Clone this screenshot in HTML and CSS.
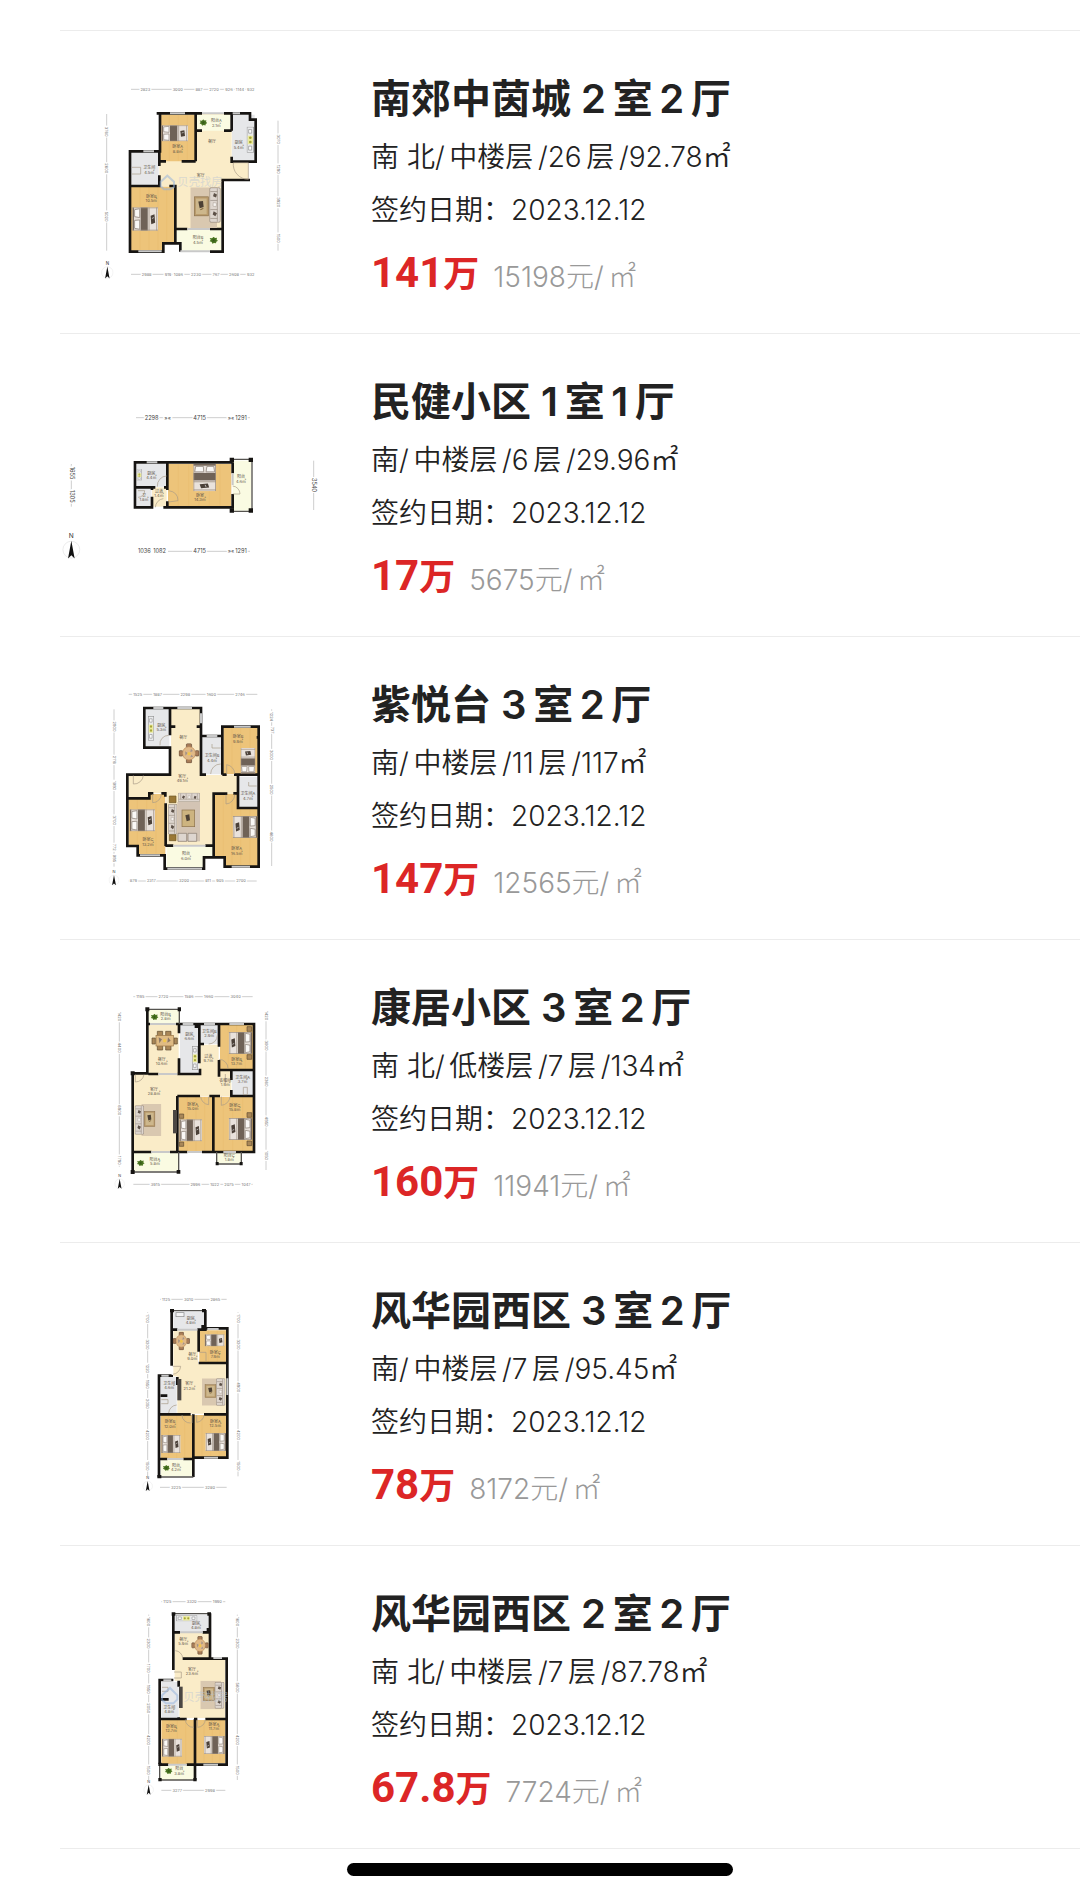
FILE: index.html
```
<!DOCTYPE html>
<html lang="zh-CN">
<head>
    <meta charset="UTF-8">
    <meta name="viewport" content="width=device-width, initial-scale=1.0">
    <title>成交记录</title>
    <link rel="stylesheet" href="styles.css">
</head>
<body>
    <!-- furniture shared by the floor plans -->
    <svg class="defs" width="0" height="0" aria-hidden="true">
        <defs>
            <symbol id="bed" viewBox="0 0 80 50" preserveAspectRatio="none">
                <rect width="80" height="50" fill="#e9e2dc"/>
                <rect width="5" height="50" fill="#77685a"/>
                <path d="M7 5l16-2v19l-16-2zM7 28l16-1v20l-16-2z" fill="#faf8f6" stroke="#8d8279" stroke-width="2"/>
                <rect x="26" width="22" height="50" fill="#6f6257"/>
                <path d="M52 0v50M76 0v50M0 1h80M0 49h80" stroke="#9b8d80" stroke-width="2"/>
                <path d="M57 18l12-3 2 18-12 3z" fill="#4b4038"/>
                <path d="M61 24l6-2" stroke="#ddd" stroke-width="2"/>
            </symbol>
            <symbol id="sofa" viewBox="0 0 34 100" preserveAspectRatio="none">
                <rect x="1" y="1" width="32" height="98" rx="4" fill="#ded6cf" stroke="#85786c" stroke-width="2"/>
                <path d="M24 3v94M3 12h21M3 37h21M3 63h21M3 88h21" stroke="#968a7f" stroke-width="2"/>
                <path d="M14 16l9 4-3 9-9-4zM13 68l10 5-5 9-8-5z" fill="#5d5148"/>
                <path d="M12 43l10 2-2 10-9-2z" fill="#f6f3f0" stroke="#85786c"/>
            </symbol>
            <symbol id="table" viewBox="0 0 80 120" preserveAspectRatio="none">
                <rect width="80" height="120" fill="#d9c8b0"/>
                <rect x="12" y="28" width="42" height="56" fill="#b99b6c" stroke="#8b704a" stroke-width="2"/>
                <rect x="17" y="33" width="32" height="46" fill="#cdb78c"/>
                <path d="M24 42l14-2 2 18-12 4z" fill="#4d4134"/>
                <path d="M30 66l9-4" stroke="#7b6238" stroke-width="3"/>
            </symbol>
            <symbol id="plant" viewBox="0 0 26 22">
                <path d="M13 0l4 4 6-1-1 6 4 3-5 3-1 5-6-1-5 2-2-5-6-2 3-5-3-5 7 1z" fill="#4f7a25"/>
                <path d="M6 11h14M13 5v12M8 6l10 10M18 6L8 16" stroke="#2f5513" stroke-width="1.5"/>
            </symbol>
            <symbol id="dining" viewBox="0 0 64 60" preserveAspectRatio="none">
                <g fill="#a77c58" stroke="#5f4734" stroke-width="2">
                    <rect x="24" y="1" width="16" height="12" rx="3"/>
                    <rect x="24" y="47" width="16" height="12" rx="3"/>
                    <rect x="1" y="22" width="12" height="16" rx="3"/>
                    <rect x="51" y="22" width="12" height="16" rx="3"/>
                </g>
                <circle cx="32" cy="30" r="20" fill="#e0b987" stroke="#b88758" stroke-width="2"/>
                <path d="M20 24l8 5-7 8zM38 16l6 7-8 4zM40 34l5 6-9 2z" fill="#a2938a"/>
                <circle cx="32" cy="31" r="5" fill="#f1c64b"/>
            </symbol>
            <symbol id="compass" viewBox="0 0 50 80">
                <circle cx="25" cy="50" r="23" fill="#fff" stroke="#ddd" stroke-width="1.5"/>
                <path d="M25 26l9 48-9-9-9 9z" fill="#111"/>
                <text x="25" y="18" font-size="18" text-anchor="middle" fill="#333">N</text>
            </symbol>
            <symbol id="stove" viewBox="0 0 22 80" preserveAspectRatio="none">
                <rect x="1" y="1" width="20" height="78" fill="#e9eaec" stroke="#8d8d8d" stroke-width="2"/>
                <rect x="3" y="28" width="16" height="26" fill="#eceb9c"/>
                <path d="M6 9h9v11H6zM6 60h9v12H6z" fill="#fff" stroke="#888" stroke-width="2"/>
                <circle cx="11" cy="34" r="4" fill="#a5a43a"/>
                <circle cx="11" cy="47" r="4" fill="#a5a43a"/>
            </symbol>
        </defs>
    </svg>

    <main class="list">
        <article class="item">
            <svg class="plan" viewBox="30 6 780 720" role="img" aria-label="户型图">
                <path class="hall" d="M328 162H545V304H595V360H515V506H378V380H328z"/>
                <path class="wood" d="M330 164H437V304H330zM243 380H376V548H340V572H243z"/>
                <path class="grain" d="M358 165V303M385 165V303M412 165V303M270 381V571M297 381V571M324 381V571M350 381V546"/>
                <path class="tile" d="M243 276H326V378H243zM546 164H614V303H546z"/>
                <path class="balcony" d="M441 164H543V212H441zM380 508H515V572H395V548H380z"/>
                <path class="wall" d="M328 160H437V304M320 160H330V274H240V575H340V550H391V575M437 160H456M522 160H545V212M545 160H600V179H617V305H545V290M600 360H518V575H480M328 274V318M328 346V378H240M358 378H376V550M376 507H412M480 507H518M437 212H456M522 212H545M330 304H348M395 304H437"/>
                <path class="window" d="M360 160H405M280 274H312M265 574H335M456 160H522M391 574H480M548 160H570M412 507H480"/>
                <path class="door" d="M550 308H595V358A45 45 0 0 1 550 308M246 322H272V342H246"/>
                <use href="#bed" x="334" y="196" width="80" height="48"/>
                <use href="#bed" x="247" y="442" width="77" height="70"/>
                <use href="#table" x="421" y="382" width="80" height="122"/>
                <use href="#sofa" x="478" y="382" width="34" height="106"/>
                <use href="#plant" x="446" y="178" width="28" height="20"/>
                <use href="#plant" x="477" y="530" width="28" height="22"/>
                <use href="#stove" x="590" y="200" width="22" height="78"/>
                <g class="mark"><path d="M332 365l20-18 20 18v16l-12 7h-18l-10-9z"/><text x="382" y="379">贝壳找房</text></g>
                <g class="room">
                    <text x="383" y="265">卧室A</text><text x="383" y="280">8.8㎡</text>
                    <text x="304" y="413">卧室B</text><text x="304" y="427">10.5㎡</text>
                    <text x="298" y="327">卫生间</text><text x="298" y="341">4.5㎡</text>
                    <text x="499" y="187">阳台A</text><text x="499" y="200">2.1㎡</text>
                    <text x="566" y="252">厨房</text><text x="566" y="266">5.4㎡</text>
                    <text x="486" y="250">餐厅</text><text x="452" y="350">客厅</text>
                    <text x="444" y="538">阳台B</text><text x="444" y="552">4.5㎡</text>
                </g>
                <path class="rule" d="M243 88H612M243 643H612M170 162V572M684 182V572"/>
                <g class="dim">
                    <text x="286" y="92">2823</text><text x="383" y="92">3000</text><text x="447" y="92">887</text><text x="492" y="92">2720</text><text x="537" y="92">926</text><text x="570" y="92">1144</text><text x="602" y="92">932</text>
                    <text x="290" y="647">2988</text><text x="354" y="647">919</text><text x="385" y="647">1086</text><text x="438" y="647">2230</text><text x="498" y="647">767</text><text x="552" y="647">2608</text><text x="602" y="647">932</text>
                </g>
                <g class="dim down">
                    <text x="170" y="220">3760</text><text x="170" y="330">2600</text><text x="170" y="475">5020</text>
                    <text x="684" y="243">3070</text><text x="684" y="333">1280</text><text x="684" y="432">3820</text><text x="684" y="540">1500</text>
                </g>
                <use href="#compass" x="153" y="600" width="38" height="60"/>
            </svg>
            <div class="info">
                <h2 class="title">南郊中茵城 2&#8198;室&#8198;2&#8198;厅</h2>
                <p class="meta">南 北/&#8198;中楼层&#8198;/26&#8198;层&#8198;/92.78㎡</p>
                <p class="meta">签约日期：2023.12.12</p>
                <p class="price"><strong class="total"><span class="num">141</span>万</strong><span class="unit">15198元/&#8198;㎡</span></p>
            </div>
        </article>

        <article class="item">
            <svg class="plan" viewBox="30 -75 780 720" role="img" aria-label="户型图">
                <path class="hall" d="M306 292H350V350H306z"/>
                <path class="wood" d="M354 222H544V348H354z"/>
                <path class="grain" d="M385 223V347M416 223V347M447 300V347M478 300V347M510 223V347"/>
                <path class="tile" d="M260 222H350V290H260zM260 294H304V348H260z"/>
                <path class="balcony" d="M548 212H604V362H548z"/>
                <path class="wall" d="M310 352H255V217H548M352 217V300M352 334V352H548V312M548 217V250M255 292H316M306 292V300M306 320V350M342 292H352M340 352H354"/>
                <path class="thin" d="M548 208H606V364H548"/>
                <path class="post" d="M539 203h13v13h-13zM596 203h13v13h-13zM539 355h13v13h-13zM596 355h13v13h-13z"/>
                <path class="window" d="M290 217H322M548 250V285"/>
                <path class="door" d="M322 290A28 30 0 0 1 350 258M356 302Q384 306 384 332L356 336M316 352A26 28 0 0 1 340 326M548 312H570A24 24 0 0 0 548 288M264 302H284A20 20 0 0 1 264 322"/>
                <g transform="translate(498 222) rotate(90)"><use href="#bed" width="82" height="68"/></g>
                <use href="#stove" x="260" y="238" width="16" height="34"/>
                <g class="room">
                    <text x="304" y="254">厨房</text><text x="304" y="268">4.4㎡</text>
                    <text x="282" y="322">卫</text><text x="282" y="334">1.8㎡</text>
                    <text x="327" y="308">过道</text><text x="327" y="320">1.4㎡</text>
                    <text x="450" y="321">卧室</text><text x="450" y="334">14.3㎡</text>
                    <text x="573" y="265">阳台</text><text x="573" y="278">4.6㎡</text>
                </g>
                <path class="rule" d="M258 83H600M354 484H600M64 222V350M791 212V360"/>
                <g class="dim big">
                    <text x="305" y="89">2298</text><text x="353" y="89">»«</text><text x="449" y="89">4715</text><text x="543" y="89">»«</text><text x="573" y="89">1291</text>
                    <text x="283" y="490">1036</text><text x="329" y="490">1082</text><text x="449" y="490">4715</text><text x="543" y="490">»«</text><text x="573" y="490">1291</text>
                </g>
                <g class="dim big down">
                    <text x="64" y="256">1655</text><text x="64" y="326">1305</text><text x="791" y="292">3540</text>
                </g>
                <use href="#compass" x="36" y="424" width="56" height="88"/>
            </svg>
            <div class="info">
                <h2 class="title">民健小区 1&#8198;室&#8198;1&#8198;厅</h2>
                <p class="meta">南/&#8198;中楼层&#8198;/6&#8198;层&#8198;/29.96㎡</p>
                <p class="meta">签约日期：2023.12.12</p>
                <p class="price"><strong class="total"><span class="num">17</span>万</strong><span class="unit">5675元/&#8198;㎡</span></p>
            </div>
        </article>

        <article class="item">
            <svg class="plan" viewBox="-90 -36 780 720" role="img" aria-label="户型图">
                <path class="hall" d="M243 86H330V285H442V342H370V496H228V340H178V354H115V286H243z"/>
                <path class="wood" d="M400 142H506V283H400zM115 356H178V342H226V522H145V496H115zM373 342H442V384H506V558H404V530H373z"/>
                <path class="grain" d="M426 143V282M452 143V282M480 143V282M142 358V495M170 358V520M198 345V520M400 345V528M426 345V556M452 386V556M480 386V556"/>
                <path class="tile" d="M168 86H238V200H168zM334 172H396V283H334zM446 290H504V382H446z"/>
                <path class="balcony" d="M230 500H368V530H340V562H230z"/>
                <path class="wall" d="M240 84H163V203H240V284H112V498H143V526H224V566H342V532H404V560H506V140H397V168H333V84H240V166M333 140H320M240 140H256M333 168V284H348M397 168V284M397 284H410M432 284H506M444 284V384H506M444 340H430M412 341H371V530M227 370V498M115 355H178V340H190M214 340H226V350M226 497H250M346 497H371M500 172H506"/>
                <path class="window" d="M190 84H220M262 84H306M350 168H382M432 140H482M150 526H210M425 560H480M232 566H336M250 497H346M333 100V130"/>
                <path class="door" d="M130 286V312A28 28 0 0 0 160 286M188 342V368A26 26 0 0 0 214 342M410 282V254A28 28 0 0 1 434 282M408 344V372A28 28 0 0 0 434 344M210 196A26 26 0 0 1 236 166M362 282A30 30 0 0 1 392 252M366 192V204H392M476 306V318H500"/>
                <rect x="262" y="366" width="68" height="118" fill="#d3c4b4"/>
                <rect x="276" y="390" width="38" height="50" fill="#cdb480" stroke="#8b704a" stroke-width="2"/>
                <path d="M286 406l12-3 2 18-10 3z" fill="#4d4134"/>
                <use href="#sofa" x="234" y="372" width="28" height="92"/>
                <g transform="translate(330 338) rotate(90)"><use href="#sofa" width="28" height="66"/></g>
                <path d="M238 348h20v20h-20zM238 464h20v18h-20z" fill="#9a7836" stroke="#6d5423" stroke-width="2"/>
                <path d="M264 460h26v24h-26zM294 460h26v24h-26z" fill="#ded6cf" stroke="#85786c" stroke-width="2"/>
                <use href="#dining" x="266" y="190" width="62" height="60"/>
                <use href="#bed" x="119" y="388" width="76" height="66"/>
                <g transform="translate(502 474) rotate(180)"><use href="#bed" width="74" height="66"/></g>
                <g transform="translate(452 282) rotate(-90)"><use href="#bed" width="78" height="44"/></g>
                <use href="#stove" x="174" y="108" width="18" height="74"/>
                <g class="room">
                    <text x="214" y="140">厨房</text><text x="214" y="154">5.3㎡</text>
                    <text x="280" y="178">餐厅</text>
                    <text x="277" y="294">客厅</text><text x="277" y="307">49.1㎡</text>
                    <text x="366" y="232">卫生间B</text><text x="366" y="246">4.4㎡</text>
                    <text x="444" y="175">卧室B</text><text x="444" y="189">9.9㎡</text>
                    <text x="474" y="346">卫生间A</text><text x="474" y="359">4.7㎡</text>
                    <text x="174" y="484">卧室C</text><text x="174" y="498">13.2㎡</text>
                    <text x="440" y="510">卧室A</text><text x="440" y="524">16.5㎡</text>
                    <text x="288" y="526">阳台</text><text x="288" y="540">6.0㎡</text>
                </g>
                <path class="rule" d="M116 43H502M116 603H500M72 88V560M545 88V558"/>
                <g class="dim">
                    <text x="143" y="47">1525</text><text x="203" y="47">1887</text><text x="286" y="47">2298</text><text x="364" y="47">1600</text><text x="450" y="47">2746</text>
                    <text x="130" y="607">879</text><text x="184" y="607">2317</text><text x="282" y="607">3200</text><text x="354" y="607">811</text><text x="390" y="607">905</text><text x="453" y="607">2700</text>
                </g>
                <g class="dim down">
                    <text x="72" y="145">2800</text><text x="72" y="245">2116</text><text x="72" y="322">1980</text><text x="72" y="426">3700</text><text x="72" y="507">772</text><text x="72" y="541">985</text>
                    <text x="545" y="115">1224</text><text x="545" y="156">737</text><text x="545" y="230">3000</text><text x="545" y="334">2500</text><text x="545" y="475">4600</text>
                </g>
                <use href="#compass" x="55" y="568" width="34" height="52"/>
            </svg>
            <div class="info">
                <h2 class="title">紫悦台 3&#8198;室&#8198;2&#8198;厅</h2>
                <p class="meta">南/&#8198;中楼层&#8198;/11&#8198;层&#8198;/117㎡</p>
                <p class="meta">签约日期：2023.12.12</p>
                <p class="price"><strong class="total"><span class="num">147</span>万</strong><span class="unit">12565元/&#8198;㎡</span></p>
            </div>
        </article>

        <article class="item">
            <svg class="plan" viewBox="-120 -27 780 720" role="img" aria-label="户型图">
                <path class="hall" d="M145 134H236V280H298V194H356V272H394V348H232V514H102V282H145z"/>
                <path class="wood" d="M360 134H460V270H360zM236 350H337V514H236zM342 350H460V514H342z"/>
                <path class="grain" d="M385 135V269M410 135V269M436 135V269M262 351V513M288 351V513M314 351V513M370 351V513M398 351V513M428 351V513"/>
                <path class="tile" d="M240 134H296V278H240zM300 134H356V192H300zM396 272H460V346H396z"/>
                <path class="balcony" d="M145 90H238V132H145zM102 518H234V574H102zM352 518H422V550H352z"/>
                <path class="wall" d="M142 88V280H98V576M142 132H150M228 132H462V516H345M98 516H154M210 516H262M306 516H345M237 132V160M237 235V280M232 282H300V266M298 132V250M298 192H312M357 132V200M357 240V270H462M357 270V290M394 270V300M394 330V348H462M232 348H300M328 348H360M392 348H462M232 348V516M340 348V516M175 282H145"/>
                <path class="thin" d="M142 88H238V132M98 576H236V516M350 516V552H424V516"/>
                <path class="post" d="M136 82h12v12h-12zM233 82h10v12h-10zM230 570h11v11h-11zM92 570h12v12h-12zM347 546h9v10h-9zM419 546h9v10h-9zM284 130h16v14h-16zM92 274h12v12h-12z"/>
                <path class="window" d="M150 132H228M248 132H280M312 132H345M388 132H432M262 516H306M175 282H232M154 516H210M370 516H408"/>
                <path class="door" d="M106 284V306A28 28 0 0 0 132 284M357 238A27 27 0 0 1 384 266M302 350A26 26 0 0 0 326 374V350M364 350V376A28 28 0 0 0 390 350M326 192A26 26 0 0 0 352 166M430 322H442V344H430zM376 282V310"/>
                <g transform="translate(456 222) rotate(180)"><use href="#bed" width="70" height="66"/></g>
                <use href="#bed" x="238" y="418" width="68" height="66"/>
                <g transform="translate(456 480) rotate(180)"><use href="#bed" width="70" height="66"/></g>
                <g fill="#a98758" stroke="#5e4a30" stroke-width="2">
                    <path d="M441 140h14v14h-14zM441 224h14v14h-14zM238 402h13v13h-13zM238 486h13v13h-13zM441 398h14v14h-14zM441 483h14v14h-14z"/>
                    <path d="M172 154h16v56h-16zM197 154h16v56h-16zM156 174h10v18h-10zM222 174h10v18h-10z"/>
                </g>
                <rect x="168" y="166" width="52" height="32" fill="#dfbb84" stroke="#987343" stroke-width="2"/>
                <path d="M176 172l10 6-8 12zM204 172l8 10-10 6z" fill="#8b7868"/>
                <circle cx="194" cy="182" r="5" fill="#f1c64b"/>
                <use href="#table" x="124" y="372" width="60" height="96"/>
                <use href="#sofa" x="104" y="376" width="28" height="88"/>
                <rect x="219" y="390" width="12" height="70" fill="#4b4743"/>
                <use href="#stove" x="276" y="198" width="18" height="72"/>
                <use href="#plant" x="151" y="101" width="25" height="20"/>
                <use href="#plant" x="109" y="539" width="26" height="20"/>
                <g class="room">
                    <text x="197" y="107">阳台B</text><text x="197" y="120">2.8㎡</text>
                    <text x="185" y="244">餐厅</text><text x="185" y="256">10.6㎡</text>
                    <text x="268" y="168">厨房</text><text x="268" y="181">6.6㎡</text>
                    <text x="328" y="160">卫生间B</text><text x="328" y="172">2.9㎡</text>
                    <text x="325" y="233">过道</text><text x="325" y="246">9.7㎡</text>
                    <text x="410" y="242">卧室B</text><text x="410" y="255">13.7㎡</text>
                    <text x="428" y="296">卫生间A</text><text x="428" y="309">3.7㎡</text>
                    <text x="376" y="305">衣帽间</text><text x="376" y="317">1.9㎡</text>
                    <text x="162" y="332">客厅</text><text x="162" y="345">28.8㎡</text>
                    <text x="278" y="378">卧室A</text><text x="278" y="390">15.0㎡</text>
                    <text x="404" y="380">卧室C</text><text x="404" y="393">15.8㎡</text>
                    <text x="165" y="542">阳台A</text><text x="165" y="556">5.8㎡</text>
                    <text x="388" y="530">阳台C</text><text x="388" y="543">1.8㎡</text>
                </g>
                <path class="rule" d="M100 50H458M100 613H458M58 96V560M498 96V570"/>
                <g class="dim">
                    <text x="121" y="54">1195</text><text x="190" y="54">2720</text><text x="267" y="54">1586</text><text x="326" y="54">1660</text><text x="407" y="54">3040</text>
                    <text x="166" y="617">3915</text><text x="286" y="617">2996</text><text x="344" y="617">1022</text><text x="387" y="617">2075</text><text x="438" y="617">1047</text>
                </g>
                <g class="dim down">
                    <text x="58" y="115">1420</text><text x="58" y="208">4400</text><text x="58" y="396">6800</text><text x="58" y="546">1780</text>
                    <text x="498" y="112">1420</text><text x="498" y="202">3900</text><text x="498" y="310">2360</text><text x="498" y="430">4850</text><text x="498" y="532">1050</text>
                </g>
                <use href="#compass" x="42" y="580" width="34" height="50"/>
            </svg>
            <div class="info">
                <h2 class="title">康居小区 3&#8198;室&#8198;2&#8198;厅</h2>
                <p class="meta">南 北/&#8198;低楼层&#8198;/7&#8198;层&#8198;/134㎡</p>
                <p class="meta">签约日期：2023.12.12</p>
                <p class="price"><strong class="total"><span class="num">160</span>万</strong><span class="unit">11941元/&#8198;㎡</span></p>
            </div>
        </article>

        <article class="item">
            <svg class="plan" viewBox="-180 -33 780 720" role="img" aria-label="户型图">
                <path class="hall" d="M160 136H234V236H320V386H172V274H160z"/>
                <path class="wood" d="M238 136H320V232H238zM122 390H217V520H122zM222 390H320V516H222z"/>
                <path class="grain" d="M265 137V231M292 137V231M146 391V519M170 391V519M194 391V519M246 391V515M272 391V515M298 391V515"/>
                <path class="tile" d="M160 80H254V132H160zM122 276H170V386H122z"/>
                <path class="balcony" d="M122 524H217V574H122z"/>
                <path class="wall" d="M155 75V242M155 134H172M232 134H256V75M256 130H322V518H222M236 134V200M236 234H322M155 270V272H117V576M122 332H142M172 276V300M120 388H212M172 384V388M252 388H322M220 388V576M120 522H142M190 522H220"/>
                <path class="thin" d="M155 77H256M117 576H220"/>
                <path class="post" d="M150 72h12v10h-12zM246 72h12v10h-12zM112 570h12v10h-12zM244 120h12v12h-12z"/>
                <path class="window" d="M262 132H296M172 134H232M124 272H146M322 280V330M252 518H294M142 522H190"/>
                <path class="door" d="M158 244H182A26 26 0 0 1 158 268M238 202H258V228M216 390V414M230 390V412A24 24 0 0 0 252 390M186 390A24 24 0 0 0 212 414M146 384A26 26 0 0 1 170 360M124 344H144V356H124"/>
                <use href="#dining" x="158" y="140" width="52" height="56"/>
                <use href="#bed" x="254" y="148" width="60" height="36"/>
                <use href="#bed" x="124" y="450" width="58" height="54"/>
                <g transform="translate(318 498) rotate(180)"><use href="#bed" width="62" height="54"/></g>
                <use href="#table" x="246" y="280" width="62" height="82"/>
                <use href="#sofa" x="288" y="280" width="28" height="82"/>
                <rect x="172" y="282" width="12" height="64" fill="#4b4743"/>
                <rect x="168" y="83" width="24" height="12" fill="#f4f4f4" stroke="#888" stroke-width="2"/>
                <use href="#plant" x="128" y="539" width="22" height="20"/>
                <g class="room">
                    <text x="212" y="104">厨房</text><text x="212" y="117">4.8㎡</text>
                    <text x="217" y="213">餐厅</text><text x="217" y="226">9.0㎡</text>
                    <text x="286" y="207">卧室C</text><text x="286" y="220">7.9㎡</text>
                    <text x="148" y="300">卫生间</text><text x="148" y="313">4.6㎡</text>
                    <text x="208" y="301">客厅</text><text x="208" y="314">21.2㎡</text>
                    <text x="150" y="415">卧室B</text><text x="150" y="428">12.0㎡</text>
                    <text x="286" y="413">卧室A</text><text x="286" y="426">12.5㎡</text>
                    <text x="168" y="546">阳台</text><text x="168" y="559">4.2㎡</text>
                </g>
                <path class="rule" d="M120 43H320M120 607H320M83 82V574M354 82V574"/>
                <g class="dim">
                    <text x="138" y="47">1125</text><text x="206" y="47">3010</text><text x="286" y="47">2865</text>
                    <text x="168" y="611">3225</text><text x="270" y="611">3280</text>
                </g>
                <g class="dim down">
                    <text x="83" y="106">1700</text><text x="83" y="184">3200</text><text x="83" y="256">1220</text><text x="83" y="303">1850</text><text x="83" y="362">2050</text><text x="83" y="455">4200</text><text x="83" y="548">1500</text>
                    <text x="354" y="106">1700</text><text x="354" y="184">3200</text><text x="354" y="312">4800</text><text x="354" y="455">4200</text><text x="354" y="548">1500</text>
                </g>
                <use href="#compass" x="66" y="572" width="34" height="50"/>
            </svg>
            <div class="info">
                <h2 class="title">风华园西区 3&#8198;室&#8198;2&#8198;厅</h2>
                <p class="meta">南/&#8198;中楼层&#8198;/7&#8198;层&#8198;/95.45㎡</p>
                <p class="meta">签约日期：2023.12.12</p>
                <p class="price"><strong class="total"><span class="num">78</span>万</strong><span class="unit">8172元/&#8198;㎡</span></p>
            </div>
        </article>

        <article class="item">
            <svg class="plan" viewBox="-180 -39 780 720" role="img" aria-label="户型图">
                <path class="hall" d="M164 128H268V206H315V384H178V272H164z"/>
                <path class="wood" d="M124 390H222V522H124zM228 390H316V520H228z"/>
                <path class="grain" d="M148 391V521M172 391V521M197 391V521M252 391V519M277 391V519M300 391V519"/>
                <path class="tile" d="M164 74H268V126H164zM124 276H176V384H124z"/>
                <path class="balcony" d="M122 526H222V570H122z"/>
                <path class="wall" d="M160 70V240M160 127H180M248 127H270M270 70V205M188 206H320V524H228M160 270H119V522M122 328H146M176 272V290M120 387H200M176 382V387M222 387H232M256 387H320M225 387V570M120 524H145M200 524H225"/>
                <path class="thin" d="M160 71H270M119 522V570H225"/>
                <path class="post" d="M155 67h11v10h-11zM262 67h11v10h-11zM115 564h10v10h-10zM220 564h10v10h-10zM260 114h12v12h-12zM115 518h10v10h-10z"/>
                <path class="window" d="M180 127H248M130 271H154M280 204H306M250 524H294M145 524H200"/>
                <path class="door" d="M166 182A24 24 0 0 1 188 204M162 246H184V264H162M196 388A24 24 0 0 0 222 412M232 410V388M232 412A24 24 0 0 0 256 388M126 292H144V304H126"/>
                <use href="#dining" x="214" y="138" width="52" height="56"/>
                <use href="#bed" x="126" y="446" width="60" height="54"/>
                <g transform="translate(314 492) rotate(180)"><use href="#bed" width="62" height="54"/></g>
                <use href="#table" x="241" y="272" width="62" height="86"/>
                <use href="#sofa" x="284" y="276" width="29" height="80"/>
                <rect x="177" y="290" width="11" height="64" fill="#4b4743"/>
                <g transform="translate(232 76) rotate(90)"><use href="#stove" width="18" height="64"/></g>
                <use href="#plant" x="134" y="533" width="24" height="20"/>
                <g class="mark"><path d="M126 316l24-22 22 22v12l-12 12h-22l-12-10z"/><text x="190" y="332">贝壳找房</text></g>
                <g class="room">
                    <text x="228" y="106">厨房</text><text x="228" y="118">4.8㎡</text>
                    <text x="190" y="154">餐厅</text><text x="190" y="166">5.9㎡</text>
                    <text x="216" y="242">客厅</text><text x="216" y="254">23.6㎡</text>
                    <text x="148" y="358">卫生间</text><text x="148" y="370">4.8㎡</text>
                    <text x="154" y="414">卧室B</text><text x="154" y="427">12.7㎡</text>
                    <text x="282" y="408">卧室A</text><text x="282" y="421">11.7㎡</text>
                    <text x="178" y="541">阳台</text><text x="178" y="554">3.8㎡</text>
                </g>
                <path class="rule" d="M124 35H316M124 601H316M86 74V570M352 74V570"/>
                <g class="dim">
                    <text x="142" y="39">1125</text><text x="215" y="39">3320</text><text x="292" y="39">1990</text>
                    <text x="172" y="605">3277</text><text x="270" y="605">2998</text>
                </g>
                <g class="dim down">
                    <text x="86" y="100">1600</text><text x="86" y="166">2300</text><text x="86" y="240">1700</text><text x="86" y="303">1850</text><text x="86" y="360">2050</text><text x="86" y="455">4200</text><text x="86" y="546">1500</text>
                    <text x="352" y="100">1600</text><text x="352" y="166">2300</text><text x="352" y="298">5600</text><text x="352" y="455">4200</text><text x="352" y="546">1500</text>
                </g>
                <use href="#compass" x="69" y="568" width="34" height="50"/>
            </svg>
            <div class="info">
                <h2 class="title">风华园西区 2&#8198;室&#8198;2&#8198;厅</h2>
                <p class="meta">南 北/&#8198;中楼层&#8198;/7&#8198;层&#8198;/87.78㎡</p>
                <p class="meta">签约日期：2023.12.12</p>
                <p class="price"><strong class="total"><span class="num">67.8</span>万</strong><span class="unit">7724元/&#8198;㎡</span></p>
            </div>
        </article>
    </main>
    <div class="home-bar"></div>
</body>
</html>
```

FILE: styles.css
```
* {
    box-sizing: border-box;
}
body {
    margin: 0;
    background-color: #fff;
    color: #222;
    font-family: Inter, "Noto Sans CJK SC", sans-serif;
}
.defs {
    position: absolute;
}
.list {
    margin: 30px 0 0 60px;
    border-top: 1px solid #ececec;
}
.item {
    display: flex;
    align-items: center;
    gap: 51px;
    border-bottom: 1px solid #ececec;
}
.plan {
    flex: none;
    width: 260px;
    height: 240px;
}
.info {
    flex: 1;
    padding: 40px 0 32px;
}
.title {
    margin: 0 0 4px;
    font-size: 40px;
    line-height: 56px;
    font-weight: 600;
}
.meta {
    margin: 0;
    font-size: 28px;
    line-height: 53px;
    font-weight: 350;
}
.price {
    display: flex;
    align-items: baseline;
    gap: 14px;
    height: 56px;
    margin: 8px 0 0;
    line-height: 56px;
}
.total {
    color: #dc2626;
    font-size: 36px;
    font-weight: 700;
}
.num {
    font-family: Roboto, sans-serif;
    font-size: 42px;
}
.unit {
    color: #999;
    font-size: 28px;
    font-weight: 300;
}
.home-bar {
    width: 386px;
    height: 13px;
    margin: 14px auto 20px;
    border-radius: 7px;
    background-color: #000;
}

/* floor plans */
.hall {
    fill: #faecc8;
}
.wood {
    fill: #edc47a;
}
.tile {
    fill: #e6e7e9;
}
.balcony {
    fill: #fafbe2;
}
.grain {
    stroke: #e3b566;
    stroke-width: 1;
}
.wall,
.thin,
.window,
.door,
.rule {
    fill: none;
}
.wall {
    stroke: #161412;
    stroke-width: 8;
}
.thin {
    stroke: #55534f;
    stroke-width: 4;
}
.post {
    fill: #161412;
}
.window {
    stroke: #c9c9c9;
    stroke-width: 6;
}
.door {
    stroke: #a79a86;
    stroke-width: 2;
}
.rule {
    stroke: #b5b5b5;
    stroke-width: 2;
}
.room {
    fill: #5c5348;
    font-size: 12px;
    text-anchor: middle;
}
.dim {
    fill: #777;
    font-size: 12px;
    text-anchor: middle;
    paint-order: stroke;
    stroke: #fff;
    stroke-width: 8px;
}
.big {
    fill: #444;
    font-size: 17px;
}
.down text {
    transform: rotate(90deg);
    transform-box: fill-box;
    transform-origin: center;
}
.mark {
    fill: #b9c6d6;
    font-size: 34px;
    opacity: 0.5;
}
.mark path {
    fill: none;
    stroke: #8fb0dd;
    stroke-width: 6;
}
```
